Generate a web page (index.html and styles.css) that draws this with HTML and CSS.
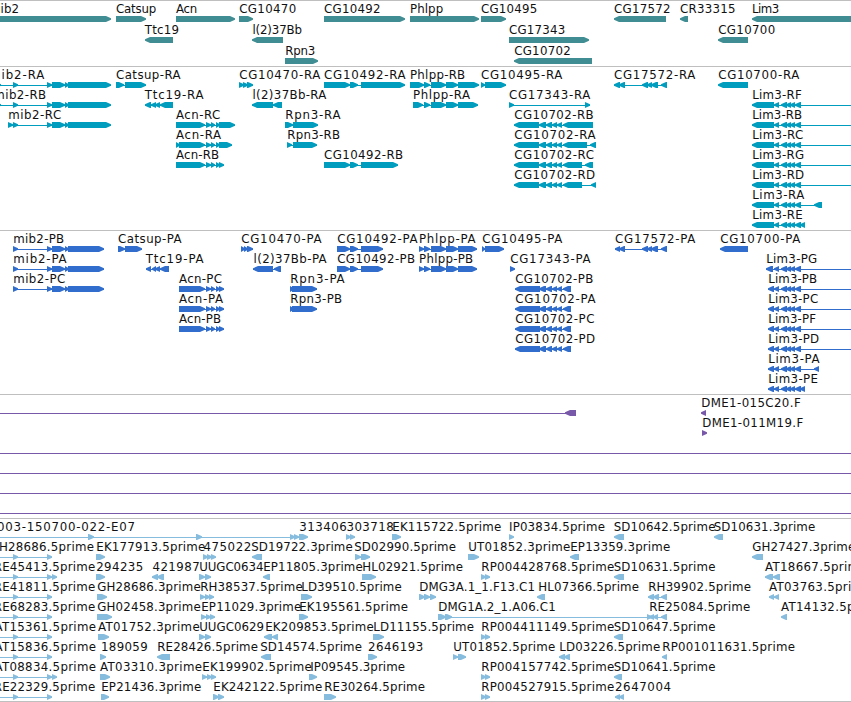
FILE: index.html
```
<!DOCTYPE html>
<html>
<head>
  <meta charset="utf-8">
  <title>Genome tracks</title>
  <link rel="stylesheet" href="styles.css">
</head>
<body>
  <div id="browser">
    <div class="track genes" id="genes"></div>
    <div class="track transcripts" id="transcripts"></div>
    <div class="track proteins" id="proteins"></div>
    <div class="track bacs" id="bacs"></div>
    <div class="track ests" id="ests"></div>
  </div>

  <script src="tracks.js"></script>
</body>
</html>
```

FILE: styles.css
```
body { margin: 0; background: #fff; overflow: hidden; }
#browser { width: 851px; display: flex; flex-direction: column; }
.track { box-sizing: border-box; border-top: 1px solid #bfbfbf; overflow: hidden; }
.track svg { display: block; width: 100%; height: 100%; }
.track text { font-family: "DejaVu Sans", sans-serif; font-size: 11.8px; fill: #111; }
.genes { height: 66px; color: #408e93; }
.transcripts { height: 164px; color: #009dbf; }
.proteins { height: 164px; color: #306dcc; }
.bacs { height: 124px; color: #7858a8; }
.ests { height: 184px; color: #86bcdd; border-bottom: 1px solid #bfbfbf; }
.exon, .intron { fill: currentColor; }
.intron { shape-rendering: crispEdges; }
```

FILE: tracks.js
```
// feature: [row, label, label left, label right, strand, exons]
const mib = [[47, 52], [52, 65], [65, 69]];
const mibR = [...mib, [68, 111]];
const mibP = [[13, 18], ...mib, [68, 104]];
const acn = [[206, 211], [211, 215], [216, 220]];
const acnP = [[179, 205], ...acn, [219, 224]];
const phl = [[424, 430], [431, 446], [446, 458]];
const phlP = [[419, 424], ...phl, [458, 477]];
const lim = [[774, 779], [781, 787], [786, 791], [790, 795], [795, 801]];
const limR = [[752, 774], ...lim];
const limP = [[768, 774], ...lim];
const cg02 = [[539, 546], [546, 552], [552, 557], [557, 562]];
const cg02R = [[514, 539], ...cg02];
const cg02P = [[515, 540], ...cg02, [563, 571]];
const cg72 = [[619, 625], [642, 648], [647, 652], [651, 658], [661, 667]];
const cg92P = [[337, 350], [350, 358], [361, 383]];
const off = [870, 880];
const est = [[-20, -12], [13, 18], [47, 52]];
const rp = [[481, 486], [485, 490]];

const genes = [
  [0, 'mib2', -10.5, 18.3, '>', [[-20, 111]]],
  [0, 'Catsup', 116.5, 155.5, '>', [[116, 146]]],
  [0, 'Acn', 176.5, 196.5, '>', [[176, 235]]],
  [0, 'CG10470', 239.7, 295.5, '>', [[239, 253]]],
  [0, 'CG10492', 324.5, 379.7, '>', [[324, 405]]],
  [0, 'Phlpp', 410.5, 442.5, '>', [[410, 479]]],
  [0, 'CG10495', 481.5, 536.5, '>', [[481, 506]]],
  [0, 'CG17572', 614.5, 669.7, '<', [[614, 666]]],
  [0, 'CR33315', 680.5, 734.7, '<', [[680, 688]]],
  [0, 'Lim3', 752.5, 778.5, '<', [[752, 900]]],
  [1, 'Ttc19', 145.2, 178.3, '<', [[145, 173]]],
  [1, 'l(2)37Bb', 253, 301.2, '<', [[252, 283]]],
  [1, 'CG17343', 509.5, 564.5, '>', [[509, 589]]],
  [1, 'CG10700', 718.7, 774.5, '<', [[718, 748]]],
  [2, 'Rpn3', 285.7, 314.5, '>', [[285, 318]]],
  [2, 'CG10702', 514.7, 570, '<', [[514, 592]]]
];

const transcripts = [
  [0, 'mib2-RA', -10.5, 43.7, '>', [[-20, -12], [-4, 1], [13, 18], ...mibR]],
  [0, 'Catsup-RA', 116.5, 180, '>', [[116, 124], [125, 146]]],
  [0, 'CG10470-RA', 239.7, 319.7, '>', [[239, 244], [243, 248], [247, 253]]],
  [0, 'CG10492-RA', 324.5, 405, '>', [[324, 350], [350, 358], [361, 405]]],
  [0, 'Phlpp-RB', 410.5, 464.5, '>', [[410, 424], ...phl, [458, 479]]],
  [0, 'CG10495-RA', 481.5, 561.7, '>', [[481, 485], [485, 506]]],
  [0, 'CG17572-RA', 614.5, 694.7, '<', [[614, 620], ...cg72]],
  [0, 'CG10700-RA', 718.7, 798.7, '<', [[718, 748]]],
  [1, 'mib2-RB', -6.2, 45.5, '>', [[-20, -12], [-4, 1], [13, 18], ...mibR]],
  [1, 'Ttc19-RA', 145.2, 203, '<', [[145, 151], [151, 156], [155, 160], [160, 173]]],
  [1, 'l(2)37Bb-RA', 253, 325.7, '<', [[252, 273], [273, 282]]],
  [1, 'Phlpp-RA', 413.5, 469.5, '>', [[413, 423], ...phl, [458, 478]]],
  [1, 'CG17343-RA', 509.5, 589.7, '>', [[509, 514], [585, 590]]],
  [1, 'Lim3-RF', 752.7, 801, '<', [...limR, off]],
  [2, 'mib2-RC', 8.7, 60.5, '>', [[8, 13], [13, 18], ...mibR]],
  [2, 'Acn-RC', 176.5, 219.5, '>', [[176, 205], ...acn, [219, 235]]],
  [2, 'Rpn3-RA', 285.7, 340, '>', [[285, 293], [293, 318]]],
  [2, 'CG10702-RB', 514.7, 593, '<', [...cg02R, [563, 593]]],
  [2, 'Lim3-RB', 752.7, 801.5, '<', [...limR, off]],
  [3, 'Acn-RA', 176.5, 220.5, '>', [[176, 180], [179, 205], ...acn, [219, 232]]],
  [3, 'Rpn3-RB', 287.7, 339.5, '>', [[287, 292], [293, 317]]],
  [3, 'CG10702-RA', 514.7, 595, '<', [...cg02R, [563, 587], [590, 596]]],
  [3, 'Lim3-RC', 752.7, 802.5, '<', [...limR, off]],
  [4, 'Acn-RB', 176.5, 218.5, '>', [[176, 205], ...acn, [219, 224]]],
  [4, 'CG10492-RB', 324.5, 402.5, '>', [[324, 350], [350, 358], [361, 398]]],
  [4, 'CG10702-RC', 514.7, 593.3, '<', [...cg02R, [563, 582], [585, 593]]],
  [4, 'Lim3-RG', 752.7, 803.5, '<', [...limR, off]],
  [5, 'CG10702-RD', 514.7, 594.5, '<', [...cg02R, [563, 582], [591, 596]]],
  [5, 'Lim3-RD', 752.7, 803.5, '<', [...limR, off]],
  [6, 'Lim3-RA', 752.7, 803.7, '<', [...limR, [814, 822]]],
  [7, 'Lim3-RE', 752.7, 802, '<', [...limR, [800, 805]]]
];

const proteins = [
  [0, 'mib2-PB', 13.7, 63.5, '>', mibP],
  [0, 'Catsup-PA', 118.5, 181, '>', [[118, 125], [125, 142]]],
  [0, 'CG10470-PA', 241.7, 321, '>', [[241, 245], [244, 248], [247, 253]]],
  [0, 'CG10492-PA', 337.7, 417, '>', cg92P],
  [0, 'Phlpp-PA', 419.5, 475, '>', phlP],
  [0, 'CG10495-PA', 482.7, 561.7, '>', [[482, 485], [485, 504]]],
  [0, 'CG17572-PA', 615.5, 694.7, '<', [[615, 620], ...cg72]],
  [0, 'CG10700-PA', 720.7, 799.7, '<', [[720, 748]]],
  [1, 'mib2-PA', 13.7, 66, '>', mibP],
  [1, 'Ttc19-PA', 146.2, 203, '<', [[146, 151], [152, 156], [155, 160], [160, 169]]],
  [1, 'l(2)37Bb-PA', 254, 326, '<', [[253, 273], [274, 281]]],
  [1, 'CG10492-PB', 337.7, 414.5, '>', cg92P],
  [1, 'Phlpp-PB', 419.5, 472.5, '>', phlP],
  [1, 'CG17343-PA', 510.7, 590, '>', [[510, 515]]],
  [1, 'Lim3-PG', 766.7, 816.5, '<', [[766, 773], ...lim, off]],
  [2, 'mib2-PC', 13.7, 64.5, '>', mibP],
  [2, 'Acn-PC', 179.5, 221.3, '>', acnP],
  [2, 'Rpn3-PA', 290.7, 344, '>', [[290, 294], [292, 317]]],
  [2, 'CG10702-PB', 515.7, 592.7, '<', cg02P],
  [2, 'Lim3-PB', 768.7, 816.5, '<', [...limP, off]],
  [3, 'Acn-PA', 179.5, 222.5, '>', acnP],
  [3, 'Rpn3-PB', 290.7, 341.5, '>', [[290, 294], [292, 317]]],
  [3, 'CG10702-PA', 515.7, 595, '<', cg02P],
  [3, 'Lim3-PC', 768.7, 817.5, '<', [...limP, off]],
  [4, 'Acn-PB', 179.5, 220.5, '>', acnP],
  [4, 'CG10702-PC', 515.7, 593.7, '<', cg02P],
  [4, 'Lim3-PF', 768.7, 815.3, '<', [...limP, off]],
  [5, 'CG10702-PD', 515.7, 594.5, '<', cg02P],
  [5, 'Lim3-PD', 768.7, 818.5, '<', [...limP, off]],
  [6, 'Lim3-PA', 768.7, 819, '<', [...limP, [814, 819]]],
  [7, 'Lim3-PE', 768.7, 817.3, '<', [...limP, [800, 805]]]
];

const bacs = [
  [0, '', 0, 0, '<', [[-20, -12], [565, 576]]],
  [0, 'DME1-015C20.F', 701.7, 800, '<', [[701, 706]]],
  [1, 'DME1-011M19.F', 702.7, 802.5, '>', [[702, 707]]],
  [2, '', 0, 0, '>', [[-20, -12], off]],
  [3, '', 0, 0, '>', [[-20, -12], off]],
  [4, '', 0, 0, '>', [[-20, -12], off]],
  [5, '', 0, 0, '>', [[-20, -12], off]]
];

const ests = [
  [0, '003-150700-022-E07', -2.5, 134.3, '>', [[-20, -12], [88, 94], [196, 202], [290, 295], [294, 299]]],
  [0, '313406', 299.7, 346, '>', [[299, 308]]],
  [0, '303718', 347, 393, '>', [[346, 351], [350, 355]]],
  [0, 'EK115722.5prime', 392.7, 500.5, '>', [[392, 401]]],
  [0, 'IP03834.5prime', 509.5, 604.3, '>', [[509, 514]]],
  [0, 'SD10642.5prime', 614.2, 714.7, '<', [[614, 624]]],
  [0, 'SD10631.3prime', 714.2, 814.5, '<', [[714, 723]]],
  [1, 'GH28686.5prime', -10, 93.3, '>', est],
  [1, 'EK177913.5prime', 96.7, 204.5, '>', [[96, 105]]],
  [1, '475022', 204, 250.5, '>', [[203, 208], [207, 212], [211, 216]]],
  [1, 'SD19722.3prime', 251.7, 352, '<', [[252, 262]]],
  [1, 'SD02990.5prime', 354.7, 455.3, '>', [[355, 361], [361, 370]]],
  [1, 'UT01852.3prime', 468.7, 569.5, '>', [[468, 479]]],
  [1, 'EP13359.3prime', 570.7, 669.5, '<', [[570, 579]]],
  [1, 'GH27427.3prime', 752.7, 854.5, '<', [[752, 763]]],
  [2, 'RE45413.5prime', -5.7, 94.5, '>', [...est, [52, 57]]],
  [2, '294235', 96.7, 142.5, '>', [[96, 105]]],
  [2, '421987', 153, 199, '<', [[152, 158], [157, 164]]],
  [2, 'UUGC0634', 199.7, 262.7, '>', [[199, 205], [205, 211]]],
  [2, 'EP11805.3prime', 263.7, 362, '<', [[263, 270]]],
  [2, 'HL02921.5prime', 362.7, 462.3, '>', [[362, 376]]],
  [2, 'RP004428768.5prime', 481.7, 613.5, '>', rp],
  [2, 'SD10631.5prime', 614.2, 714.7, '<', [[614, 624]]],
  [2, 'AT18667.5prime', 765.5, 866, '<', [[765, 773], [773, 780]]],
  [3, 'RE41811.5prime', -5.7, 94.5, '>', est],
  [3, 'GH28686.3prime', 97.7, 200, '>', [[97, 107]]],
  [3, 'RH38537.5prime', 200.7, 302, '>', [[200, 205], [205, 210], [209, 214]]],
  [3, 'LD39510.5prime', 301.7, 401, '>', [[301, 312]]],
  [3, 'DMG3A.1_1.F13.C1', 419.7, 534.3, '>', [[419, 425], [424, 430], [430, 436]]],
  [3, 'HL07366.5prime', 538.7, 638.3, '<', [[537, 545]]],
  [3, 'RH39902.5prime', 648.7, 750.3, '<', [[648, 654], [653, 659], [661, 667]]],
  [3, 'AT03763.5prime', 769.5, 870, '<', [[769, 774], [774, 779]]],
  [4, 'RE68283.5prime', -5.7, 94.5, '>', est],
  [4, 'GH02458.3prime', 97.7, 200, '>', [[97, 112]]],
  [4, 'EP11029.3prime', 201.7, 300.5, '>', [[201, 206], [206, 211], [210, 215]]],
  [4, 'EK195561.5prime', 299.7, 407.3, '>', [[299, 308]]],
  [4, 'DMG1A.2_1.A06.C1', 438.7, 555, '>', [[438, 446], [445, 452], [647, 652]]],
  [4, 'RE25084.5prime', 649.7, 749.5, '<', [[649, 654], [653, 658], [661, 667]]],
  [4, 'AT14132.5prime', 781.5, 882, '<', [[781, 787]]],
  [5, 'AT15361.5prime', -5, 95.3, '>', est],
  [5, 'AT01752.3prime', 98.5, 199, '>', [[98, 109]]],
  [5, 'UUGC0629', 199.7, 263.3, '>', [[199, 205], [205, 211]]],
  [5, 'EK209853.5prime', 265.7, 373, '<', [[264, 272], [272, 278]]],
  [5, 'LD11155.5prime', 373.7, 473.3, '>', [[373, 384]]],
  [5, 'RP004411149.5prime', 481.7, 613.5, '>', rp],
  [5, 'SD10647.5prime', 614.2, 714.7, '<', [[614, 623]]],
  [6, 'AT15836.5prime', -5, 95.3, '>', est],
  [6, '189059', 101.5, 147, '>', [[100, 106]]],
  [6, 'RE28426.5prime', 157.7, 257.3, '<', [[157, 170]]],
  [6, 'SD14574.5prime', 260.7, 361.3, '<', [[261, 271]]],
  [6, '2646193', 368.5, 422.5, '>', [[368, 377]]],
  [6, 'UT01852.5prime', 453.7, 554.5, '>', [[453, 458], [458, 466]]],
  [6, 'LD03226.5prime', 559.7, 659.5, '<', [[559, 565], [564, 570]]],
  [6, 'RP001011631.5prime', 662.7, 794.3, '<', [[662, 667]]],
  [7, 'AT08834.5prime', -5, 95.3, '>', [...est, [52, 57]]],
  [7, 'AT03310.3prime', 100.5, 201.3, '>', [[100, 110]]],
  [7, 'EK199902.5prime', 202.7, 311, '>', [[202, 207], [207, 212], [211, 216]]],
  [7, 'IP09545.3prime', 310.7, 404.3, '>', [[309, 317]]],
  [7, 'RP004157742.5prime', 481.7, 613.5, '>', rp],
  [7, 'SD10641.5prime', 614.2, 714.7, '<', [[614, 622]]],
  [8, 'RE22329.5prime', -5.7, 94.5, '>', est],
  [8, 'EP21436.3prime', 101.7, 200.5, '>', [[101, 109]]],
  [8, 'EK242122.5prime', 213.7, 321.5, '>', [[213, 219], [218, 224]]],
  [8, 'RE30264.5prime', 324.7, 424.3, '>', [[324, 336]]],
  [8, 'RP004527915.5prime', 481.7, 613.5, '>', rp],
  [8, '2647004', 615.5, 670.3, '<', [[615, 620], [619, 624]]]
];

const NS = 'http://www.w3.org/2000/svg';

function add(parent, name, attrs) {
  const el = document.createElementNS(NS, name);
  for (const key in attrs) el.setAttribute(key, attrs[key]);
  parent.appendChild(el);
  return el;
}

function drawExon(svg, a, b, y, strand) {
  // box with a pointed end, short exons are only the point
  const head = Math.min(5, b - a);
  const pts = strand === '>'
    ? [[a, y], [b - head, y], [b, y + 2.3], [b, y + 3.7], [b - head, y + 6], [a, y + 6]]
    : [[b, y], [a + head, y], [a, y + 2.3], [a, y + 3.7], [a + head, y + 6], [b, y + 6]];
  add(svg, 'polygon', { class: 'exon', points: pts.join(' ') });
}

function drawTrack(id, features, rowHeight) {
  const svg = add(document.getElementById(id), 'svg', {});
  features.forEach(([row, label, left, right, strand, exons]) => {
    const y = row * rowHeight + 15;
    const start = exons[0][0];
    const end = exons[exons.length - 1][1];
    if (exons.length > 1) {
      add(svg, 'rect', { class: 'intron', x: start, y: y + 3, width: end - start, height: 1 });
    }
    exons.forEach(([a, b]) => drawExon(svg, a, b, y, strand));
    if (label) {
      const text = add(svg, 'text', {
        x: left - 0.5,
        y: y - 3,
        textLength: right - left + 1.2,
        lengthAdjust: 'spacing'
      });
      text.textContent = label;
    }
  });
}

drawTrack('genes', genes, 21);
drawTrack('transcripts', transcripts, 20);
drawTrack('proteins', proteins, 20);
drawTrack('bacs', bacs, 20);
drawTrack('ests', ests, 20);
```
